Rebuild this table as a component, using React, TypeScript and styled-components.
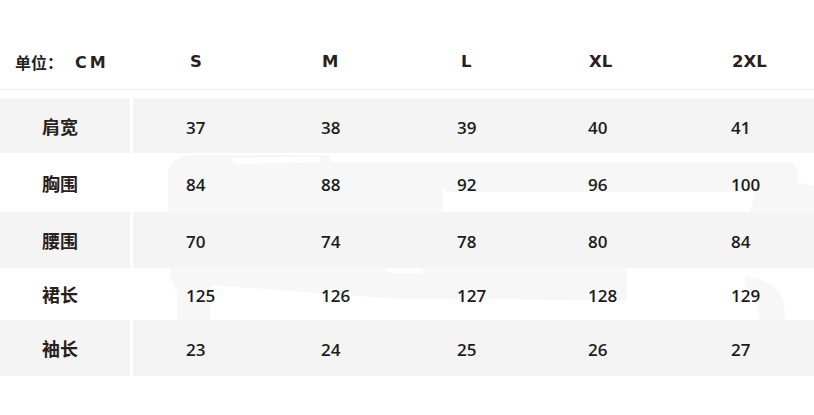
import React from "react";
import styled, { createGlobalStyle } from "styled-components";

const GlobalStyle = createGlobalStyle`
  html, body { margin: 0; padding: 0; background: #ffffff; }
  body { font-family: "Open Sans", "Noto Sans CJK SC", sans-serif; }
`;

const Page = styled.div`
  position: relative;
  width: 814px;
  height: 415px;
  overflow: hidden;
  background: #ffffff;
`;

const Watermark = styled.svg`
  position: absolute;
  left: 0;
  top: 0;
  z-index: 0;
`;

const Table = styled.div`
  position: relative;
  z-index: 1;
  display: flex;
  flex-direction: column;
`;

const HeaderRow = styled.div`
  display: grid;
  grid-template-columns: 130px 1fr;
  column-gap: 3px;
  height: 89px;
  border-bottom: 1px solid #efefef;
  margin-bottom: 8px;
  align-items: start;
`;

const UnitCell = styled.div`
  padding: 51px 0 0 15px;
  height: 22px;
  display: flex;
  align-items: center;
  color: #2a1f1f;
  white-space: nowrap;
`;

const UnitLabel = styled.span`
  font-family: "Noto Sans CJK SC", sans-serif;
  font-weight: 700;
  font-size: 16px;
`;

const UnitValue = styled.span`
  font-family: "DejaVu Sans", sans-serif;
  font-weight: 700;
  font-size: 16px;
  letter-spacing: 3px;
  margin-left: 12px;
`;

const Values = styled.div`
  display: grid;
  grid-template-columns: 135px 136px 131px 143px 1fr;
  padding-left: 53px;
  height: 100%;
  align-items: center;
`;

const HeaderValues = styled(Values)`
  padding-top: 51px;
  height: 22px;
`;

const SizeCell = styled.div<{ $offset: number }>`
  font-family: "DejaVu Sans", sans-serif;
  font-weight: 700;
  font-size: 16.5px;
  line-height: 22px;
  color: #2a1f1f;
  padding-left: ${(p) => p.$offset}px;
`;

const Row = styled.div<{ $height: number }>`
  display: grid;
  grid-template-columns: 130px 1fr;
  column-gap: 3px;
  height: ${(p) => p.$height}px;
`;

const LabelCell = styled.div<{ $shaded: boolean }>`
  background: ${(p) => (p.$shaded ? "#f4f4f4" : "transparent")};
  display: flex;
  align-items: center;
  justify-content: center;
  padding-right: 10px;
  font-family: "Noto Sans CJK SC", sans-serif;
  font-weight: 700;
  font-size: 18px;
  color: #2a1f1f;
`;

const ValueArea = styled(Values)<{ $shaded: boolean }>`
  background: ${(p) => (p.$shaded ? "#f4f4f4" : "transparent")};
`;

const Num = styled.div`
  font-family: "Open Sans", sans-serif;
  font-weight: 600;
  font-size: 17px;
  color: #1c1c1c;
  padding-top: 3px;
`;

const sizes = [
  { name: "S", offset: 4 },
  { name: "M", offset: 1 },
  { name: "L", offset: 4 },
  { name: "XL", offset: 1 },
  { name: "2XL", offset: 1 },
];

const rows = [
  { label: "肩宽", values: [37, 38, 39, 40, 41], height: 55 },
  { label: "胸围", values: [84, 88, 92, 96, 100], height: 59 },
  { label: "腰围", values: [70, 74, 78, 80, 84], height: 56 },
  { label: "裙长", values: [125, 126, 127, 128, 129], height: 52 },
  { label: "袖长", values: [23, 24, 25, 26, 27], height: 56 },
];

export default function App() {
  return (
    <Page>
      <GlobalStyle />
      <Watermark width="814" height="415" viewBox="0 0 814 415">
        <g fill="#f7f7f7">
          <path d="M168,212 L168,176 Q168,157 192,155 L330,155 L330,162 L790,162 Q800,165 797,182 L814,186 L814,212 L750,212 L756,192 L447,192 L443,188 L443,212 Z" />
          <path d="M170,268 L627,268 L627,300 L400,299 L210,285 L210,320 L177,320 L177,292 Q170,282 170,268 Z" />
          <path d="M745,276 Q776,280 783,300 L786,320 L760,320 L756,300 Q752,289 745,286 Z" />
        </g>
        <g fill="#ffffff">
          <path d="M230,158 L320,157 L322,162 L235,164 Z" />
          <rect x="387" y="268" width="36" height="5" rx="2" />
        </g>
      </Watermark>
      <Table>
        <HeaderRow>
          <UnitCell>
            <UnitLabel>单位：</UnitLabel>
            <UnitValue>CM</UnitValue>
          </UnitCell>
          <HeaderValues>
            {sizes.map((s) => (
              <SizeCell key={s.name} $offset={s.offset}>
                {s.name}
              </SizeCell>
            ))}
          </HeaderValues>
        </HeaderRow>
        {rows.map((r, i) => {
          const shaded = i % 2 === 0;
          return (
            <Row key={r.label} $height={r.height}>
              <LabelCell $shaded={shaded}>{r.label}</LabelCell>
              <ValueArea $shaded={shaded}>
                {r.values.map((v, j) => (
                  <Num key={j}>{v}</Num>
                ))}
              </ValueArea>
            </Row>
          );
        })}
      </Table>
    </Page>
  );
}
